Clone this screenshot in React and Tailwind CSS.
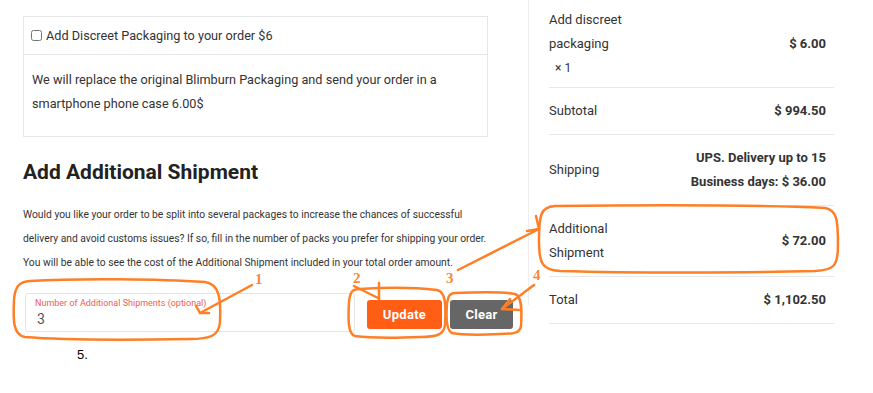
import React from 'react';

const orange = '#ff7f27';

const Annotations = () => (
  <svg className="absolute inset-0 pointer-events-none" width="873" height="393" viewBox="0 0 873 393" fill="none">
    <g stroke={orange} strokeWidth="2.5" strokeLinecap="round" strokeLinejoin="round">
      {/* 1: input */}
      <path d="M30 281 C80 278 160 279 205 282 C220 284 221 300 220 322 C219 336 210 339 190 339 C130 340 60 340 25 337 C13 335 13 320 14 300 C15 285 20 282 30 281 Z" />
      <path d="M252 285 L200 313" />
      <path d="M200 313 L196 306 M200 313 L209 313" />
      {/* 2: update */}
      <path d="M360 289 C390 287 420 288 437 290 C446 292 446 305 445 325 C444 335 436 337 420 337 C395 338 370 338 355 336 C348 334 348 320 349 302 C350 292 352 289 360 289 Z" />
      <path d="M379 283 L379 299" />
      <path d="M354 286 L378 298" />
      {/* 3: additional shipment */}
      <path d="M555 206 C640 205 760 205 825 208 C837 210 838 220 838 245 C838 266 834 270 815 271 C740 273 630 273 560 271 C541 270 539 262 539 240 C539 214 541 207 555 206 Z" />
      <path d="M458 270 L539 229" />
      <path d="M539 229 L536 216 M539 229 L527 231" />
      {/* 4: clear */}
      <path d="M455 293 C480 292 505 292 515 294 C522 296 522 310 521 326 C520 333 514 334 500 334 C480 335 462 335 452 333 C447 331 446 318 447 304 C448 296 450 293 455 293 Z" />
      <path d="M534 285 L502 309" />
      <path d="M502 309 L519 310 M502 309 L510 299" />
    </g>
    <g fill="#f8893b" fontFamily="'Liberation Serif', serif" fontWeight="bold" fontSize="15">
      <text x="255" y="284">1</text>
      <text x="353" y="283">2</text>
      <text x="446" y="283">3</text>
      <text x="533" y="280">4</text>
    </g>
  </svg>
);

const Row = ({ label, children, className = '' }) => (
  <div className={`flex items-center justify-between border-b border-[#e8e8e8] pr-[8px] ${className}`}>
    <div className="w-[100px] text-[13px] leading-[24px] text-[#333]">{label}</div>
    <div className="text-right text-[13px] leading-[24px] font-bold text-[#333]">{children}</div>
  </div>
);

export default function App() {
  return (
    <div className="relative w-[873px] h-[393px] bg-white overflow-hidden text-[#333]" style={{ fontFamily: 'Roboto, "Open Sans", sans-serif' }}>
      <div className="flex items-start">
        {/* Left column */}
        <div className="w-[528px] pl-[23px] pt-[16px]">
          <div className="w-[465px] border border-[#e6e6e6]">
            <div className="h-[38px] flex items-center px-[7px] border-b border-[#e6e6e6]">
              <input type="checkbox" className="w-[11px] h-[11px] m-0" readOnly />
              <span className="ml-[4px] text-[12.7px] text-[#333]">Add Discreet Packaging to your order $6</span>
            </div>
            <div className="px-[8px] pt-[13px] pb-[20px] text-[12.7px] leading-[24px] text-[#333]">
              We will replace the original Blimburn Packaging and send your order in a smartphone phone case 6.00$
            </div>
          </div>

          <h2 className="mt-[21px] text-[21px] leading-[28px] font-bold text-[#222]">Add Additional Shipment</h2>

          <p className="mt-[17px] w-[500px] text-[10.3px] leading-[24px] text-[#333] whitespace-nowrap">
            Would you like your order to be split into several packages to increase the chances of successful<br />
            delivery and avoid customs issues? If so, fill in the number of packs you prefer for shipping your order.<br />
            You will be able to see the cost of the Additional Shipment included in your total order amount.
          </p>

          <div className="mt-[18px] flex items-start">
            <div className="ml-[2px] w-[330px] h-[39px] border border-[#e5e5e5] rounded-[3px] pl-[9px] pt-[3px]">
              <div className="text-[9px] leading-[12px] text-[#f25c54]">Number of Additional Shipments (optional)</div>
              <div className="ml-[2px] text-[14px] leading-[20px] text-[#555]">3</div>
            </div>
            <button className="ml-[12px] mt-[7px] w-[75px] h-[29px] rounded-[3px] bg-[#ff5e14] text-white text-[13px] font-bold tracking-[0.3px]">Update</button>
            <button className="ml-[8px] mt-[7px] w-[63px] h-[29px] rounded-[3px] bg-[#666666] text-white text-[13px] font-bold tracking-[0.3px]">Clear</button>
          </div>

          <div className="mt-[15px] ml-[54px] text-[13px] leading-[16px] text-black" style={{ fontFamily: '"Liberation Sans", Arial, sans-serif' }}>5.</div>
        </div>

        {/* Divider */}
        <div className="w-px h-[305px] bg-[#eeeeee]" />

        {/* Right column */}
        <div className="ml-[20px] w-[285px]">
          <div className="flex items-center justify-between border-b border-[#e8e8e8] pr-[8px] pt-[8px] pb-[7px]">
            <div className="w-[100px] text-[13px] leading-[24px] text-[#333]">
              <div>Add discreet</div>
              <div>packaging</div>
              <div className="pl-[6px] text-[12px]">× 1</div>
            </div>
            <div className="text-[13px] leading-[24px] font-bold text-[#333]">$ 6.00</div>
          </div>
          <Row label="Subtotal" className="py-[11px]">$ 994.50</Row>
          <Row label="Shipping" className="py-[11px]">
            <div>UPS. Delivery up to 15</div>
            <div>Business days: $ 36.00</div>
          </Row>
          <Row label={<><div>Additional</div><div>Shipment</div></>} className="py-[11px]">$ 72.00</Row>
          <Row label="Total" className="py-[11px]">$ 1,102.50</Row>
        </div>
      </div>
      <Annotations />
    </div>
  );
}
